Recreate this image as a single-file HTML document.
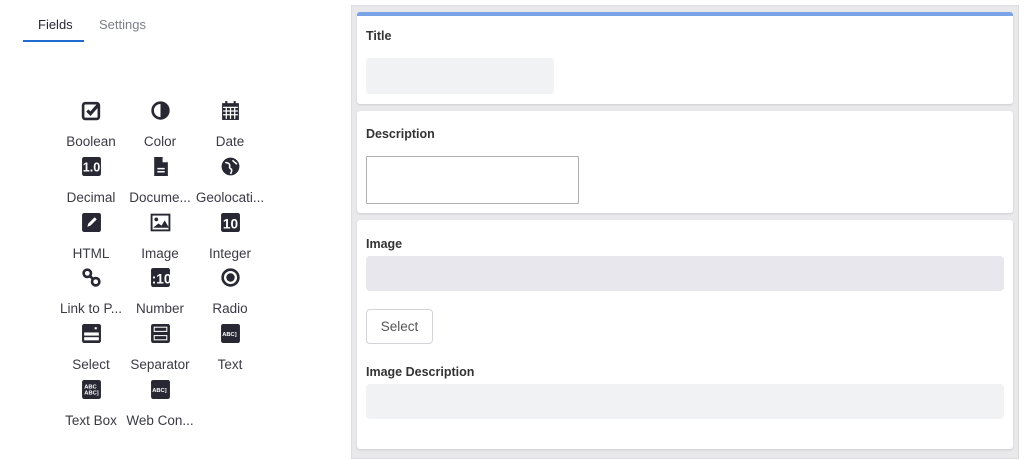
<!DOCTYPE html>
<html><head><meta charset="utf-8"><style>
*{box-sizing:border-box;margin:0;padding:0}
body{width:1024px;height:461px;background:#fff;font-family:"Liberation Sans",sans-serif;position:relative;overflow:hidden;color:#272833}
.tab{position:absolute;top:17px;font-size:13px}
.it{position:absolute;width:72px;text-align:center;font-size:13.5px;color:#3a3a44}
.it svg{display:block;margin:0 auto 13px;width:21px;height:21px}
.it span{display:block;white-space:nowrap}
.wrap{position:absolute;left:351px;top:5px;width:668px;height:454px;background:#e9e9eb;border:1px solid #dcdcdf}
.card{position:absolute;left:5px;width:656px;background:#fff;border-radius:3px;box-shadow:0 1px 2px rgba(0,0,0,.12)}
.lbl{position:absolute;left:9px;font-size:12.5px;font-weight:bold;color:#333}
.inp{position:absolute;left:9px;border-radius:4px}
</style></head><body>
<div class="tab" style="left:38px;color:#272833">Fields</div>
<div class="tab" style="left:99px;color:#7b7f86">Settings</div>
<div style="position:absolute;left:23px;top:40px;width:61px;height:2px;background:#1f6bd0"></div>

<div class="it" style="left:55px;top:100px"><svg viewBox="0 0 20 20"><rect x="2" y="3" width="15" height="15" rx="2" fill="none" stroke="#272833" stroke-width="2.5"/><path d="M6 10l3 3 8-9" fill="none" stroke="#272833" stroke-width="3"/></svg><span>Boolean</span></div>
<div class="it" style="left:124px;top:100px"><svg viewBox="0 0 20 20"><circle cx="10" cy="10" r="7.5" fill="none" stroke="#272833" stroke-width="2.5"/><path d="M10 2.5a7.5 7.5 0 0 1 0 15z" fill="#272833"/></svg><span>Color</span></div>
<div class="it" style="left:194px;top:100px"><svg viewBox="0 0 20 20"><rect x="2" y="3" width="16" height="16" fill="#272833"/><path d="M3 7h14M3 10.5h14M3 14h14M6 7v11M10 7v11M14 7v11" stroke="#fff" stroke-width="1.2"/><rect x="5" y="1" width="2" height="4" fill="#272833"/><rect x="13" y="1" width="2" height="4" fill="#272833"/></svg><span>Date</span></div>

<div class="it" style="left:55px;top:156px"><svg viewBox="0 0 20 20"><rect x="1" y="1" width="18" height="18" rx="2" fill="#272833"/><text x="10" y="15" font-size="12" font-weight="bold" fill="#fff" text-anchor="middle">1.0</text></svg><span>Decimal</span></div>
<div class="it" style="left:124px;top:156px"><svg viewBox="0 0 20 20"><path d="M4 1h8l5 5v13H4z" fill="#272833"/><path d="M7 12h7M7 15h7" stroke="#fff" stroke-width="1.5"/><path d="M12 1v5h5" fill="#fff"/></svg><span>Docume...</span></div>
<div class="it" style="left:194px;top:156px"><svg viewBox="0 0 20 20"><circle cx="10" cy="10" r="8.5" fill="#272833"/><path d="M5 6c2 1 3 0 4 2s-1 3 1 4 1 3 0 5M12 4c1 2 3 2 4 4" stroke="#fff" stroke-width="1.5" fill="none"/></svg><span>Geolocati...</span></div>

<div class="it" style="left:55px;top:212px"><svg viewBox="0 0 20 20"><rect x="1" y="1" width="18" height="18" rx="2" fill="#272833"/><path d="M6 14l1-3 6-6 2 2-6 6z" fill="#fff"/></svg><span>HTML</span></div>
<div class="it" style="left:124px;top:212px"><svg viewBox="0 0 20 20"><rect x="1.5" y="2.5" width="17" height="15" fill="none" stroke="#272833" stroke-width="1.8"/><circle cx="6" cy="7" r="1.8" fill="#272833"/><path d="M3 15l5-4 3 2 3-5 4 7z" fill="#272833"/></svg><span>Image</span></div>
<div class="it" style="left:194px;top:212px"><svg viewBox="0 0 20 20"><rect x="1" y="1" width="18" height="18" rx="2" fill="#272833"/><text x="10" y="15.5" font-size="13" font-weight="bold" fill="#fff" text-anchor="middle">10</text></svg><span>Integer</span></div>

<div class="it" style="left:55px;top:267px"><svg viewBox="0 0 20 20"><circle cx="6" cy="6" r="3.5" fill="none" stroke="#272833" stroke-width="2.5"/><circle cx="14" cy="14" r="3.5" fill="none" stroke="#272833" stroke-width="2.5"/><path d="M8 8l4 4" stroke="#272833" stroke-width="2.5"/></svg><span>Link to P...</span></div>
<div class="it" style="left:124px;top:267px"><svg viewBox="0 0 20 20"><rect x="1" y="1" width="18" height="18" rx="2" fill="#272833"/><text x="11" y="15.5" font-size="13" font-weight="bold" fill="#fff" text-anchor="middle">:10</text></svg><span>Number</span></div>
<div class="it" style="left:194px;top:267px"><svg viewBox="0 0 20 20"><circle cx="10" cy="10" r="7.5" fill="none" stroke="#272833" stroke-width="2.5"/><circle cx="10" cy="10" r="4" fill="#272833"/></svg><span>Radio</span></div>

<div class="it" style="left:55px;top:323px"><svg viewBox="0 0 20 20"><rect x="1" y="1" width="18" height="18" rx="2" fill="#272833"/><rect x="3" y="9" width="14" height="3" fill="#fff"/><rect x="3" y="13.5" width="14" height="3" fill="#fff"/><rect x="13" y="4" width="2" height="2" fill="#fff"/></svg><span>Select</span></div>
<div class="it" style="left:124px;top:323px"><svg viewBox="0 0 20 20"><rect x="1" y="1" width="18" height="18" rx="2" fill="#272833"/><rect x="3.5" y="3.5" width="13" height="5" fill="#fff"/><rect x="3.5" y="11.5" width="13" height="5" fill="#fff"/><rect x="4.5" y="4.5" width="11" height="3" fill="#272833"/><rect x="4.5" y="12.5" width="11" height="3" fill="#272833"/></svg><span>Separator</span></div>
<div class="it" style="left:194px;top:323px"><svg viewBox="0 0 20 20"><rect x="1" y="1" width="18" height="18" rx="2" fill="#272833"/><text x="9" y="12.5" font-size="5.5" font-weight="bold" fill="#fff" text-anchor="middle">ABC]</text></svg><span>Text</span></div>

<div class="it" style="left:55px;top:379px"><svg viewBox="0 0 20 20"><rect x="1" y="1" width="18" height="18" rx="2" fill="#272833"/><text x="9" y="9" font-size="5.5" font-weight="bold" fill="#fff" text-anchor="middle">ABC</text><text x="10" y="15" font-size="5.5" font-weight="bold" fill="#fff" text-anchor="middle">ABC]</text></svg><span>Text Box</span></div>
<div class="it" style="left:124px;top:379px"><svg viewBox="0 0 20 20"><rect x="1" y="1" width="18" height="18" rx="2" fill="#272833"/><text x="9" y="12.5" font-size="5.5" font-weight="bold" fill="#fff" text-anchor="middle">ABC]</text></svg><span>Web Con...</span></div>

<div class="wrap">
 <div class="card" style="top:6px;height:92px;border-top:4px solid #7aa3e5">
  <div class="lbl" style="top:13px">Title</div>
  <div class="inp" style="top:42px;width:188px;height:36px;background:#f1f2f3"></div>
 </div>
 <div class="card" style="top:105px;height:102px">
  <div class="lbl" style="top:16px">Description</div>
  <div class="inp" style="top:45px;width:213px;height:48px;background:#fff;border:1px solid #b0b0b3;border-radius:1px"></div>
 </div>
 <div class="card" style="top:214px;height:229px">
  <div class="lbl" style="top:17px">Image</div>
  <div class="inp" style="top:36px;width:638px;height:35px;background:#e7e7ed"></div>
  <div class="inp" style="top:89px;width:67px;height:35px;border:1px solid #d4d4d8;font-size:13.5px;color:#555;text-align:center;line-height:33px">Select</div>
  <div class="lbl" style="top:145px">Image Description</div>
  <div class="inp" style="top:164px;width:638px;height:35px;background:#f1f2f3"></div>
 </div>
</div>
</body></html>
